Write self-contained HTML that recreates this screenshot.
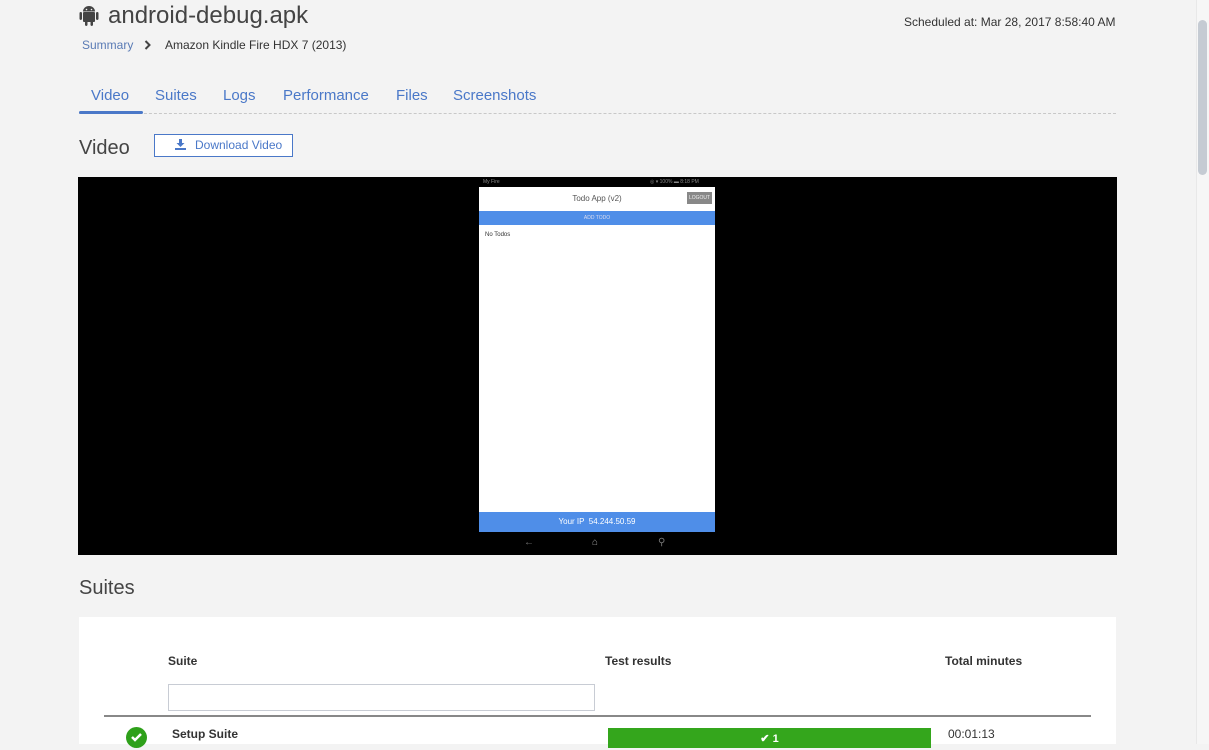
<!DOCTYPE html>
<html><head><meta charset="utf-8"><style>
*{margin:0;padding:0;box-sizing:border-box}
body{width:1209px;height:744px;overflow:hidden;background:#f3f3f3;font-family:"Liberation Sans",sans-serif;position:relative;color:#444}
.a{position:absolute}
</style></head><body>
<svg class="a" style="left:79px;top:5px" width="20" height="22" viewBox="0 0 20 22"><rect x="4" y="7" width="12" height="10" rx="1" fill="#444"/><path d="M4 6.5a6 5.5 0 0 1 12 0z" fill="#444"/><rect x="0.5" y="7" width="2.5" height="8" rx="1.2" fill="#444"/><rect x="17" y="7" width="2.5" height="8" rx="1.2" fill="#444"/><rect x="6" y="16" width="2.5" height="5" rx="1.2" fill="#444"/><rect x="11.5" y="16" width="2.5" height="5" rx="1.2" fill="#444"/><circle cx="7.5" cy="4.5" r=".8" fill="#f3f3f3"/><circle cx="12.5" cy="4.5" r=".8" fill="#f3f3f3"/></svg>
<div class="a" style="left:108px;top:2px;font-size:24px;color:#444">android-debug.apk</div>
<div class="a" style="left:82px;top:38px;font-size:12px;color:#5a7bb5">Summary</div>
<svg class="a" style="left:144px;top:40px" width="8" height="10" viewBox="0 0 8 10"><path d="M1.5 1l4 4-4 4" stroke="#444" stroke-width="2" fill="none"/></svg>
<div class="a" style="left:165px;top:38px;font-size:12px;color:#333">Amazon Kindle Fire HDX 7 (2013)</div>
<div class="a" style="left:904px;top:15px;font-size:12px;color:#333">Scheduled at: Mar 28, 2017 8:58:40 AM</div>
<div class="a" style="left:91px;top:87px;font-size:15px;color:#4a78c8">Video</div>
<div class="a" style="left:155px;top:87px;font-size:15px;color:#4a78c8">Suites</div>
<div class="a" style="left:223px;top:87px;font-size:15px;color:#4a78c8">Logs</div>
<div class="a" style="left:283px;top:87px;font-size:15px;color:#4a78c8">Performance</div>
<div class="a" style="left:396px;top:87px;font-size:15px;color:#4a78c8">Files</div>
<div class="a" style="left:453px;top:87px;font-size:15px;color:#4a78c8">Screenshots</div>
<div class="a" style="left:79px;top:113px;width:1037px;border-top:1px dashed #c8c8c8"></div>
<div class="a" style="left:79px;top:111px;width:64px;height:3px;background:#4a78c8;border-radius:2px"></div>
<div class="a" style="left:79px;top:137px;font-size:20px;color:#444">Video</div>
<div class="a" style="left:154px;top:134px;width:139px;height:23px;border:1px solid #4a78c8;background:#fff;font-size:12px;color:#4a78c8;padding:3px 0 0 40px">Download Video</div>
<svg class="a" style="left:175px;top:139px" width="11" height="11" viewBox="0 0 11 11"><path d="M4 0h3v4h2.5L5.5 8 1.5 4H4z" fill="#4a78c8"/><rect x="0" y="9" width="11" height="2" fill="#4a78c8"/></svg>
<div class="a" style="left:78px;top:177px;width:1039px;height:378px;background:#000"></div>
<div class="a" style="left:483px;top:179px;font-size:5px;color:#888">My Fire</div>
<div class="a" style="left:650px;top:179px;font-size:5px;color:#888">◎ ▾ 100% ▬ 8:18 PM</div>
<div class="a" style="left:479px;top:187px;width:236px;height:345px;background:#fff"></div>
<div class="a" style="left:479px;top:194px;width:236px;text-align:center;font-size:8px;color:#555">Todo App (v2)</div>
<div class="a" style="left:687px;top:192px;width:25px;height:12px;background:#888;font-size:5px;color:#eee;text-align:center;line-height:12px">LOGOUT</div>
<div class="a" style="left:479px;top:211px;width:236px;height:14px;background:#4f8ee8;color:#dde;font-size:5px;text-align:center;line-height:14px">ADD TODO</div>
<div class="a" style="left:485px;top:232px;font-size:6px;color:#333">No Todos</div>
<div class="a" style="left:479px;top:512px;width:236px;height:20px;background:#4f8ee8;color:#fff;font-size:8px;text-align:center;line-height:20px">Your IP &nbsp;54.244.50.59</div>
<div class="a" style="left:524px;top:537px;font-size:10px;color:#777">←</div>
<div class="a" style="left:592px;top:537px;font-size:10px;color:#999">⌂</div>
<div class="a" style="left:658px;top:537px;font-size:10px;color:#777">⚲</div>
<div class="a" style="left:79px;top:577px;font-size:20px;color:#444">Suites</div>
<div class="a" style="left:79px;top:617px;width:1037px;height:127px;background:#fff"></div>
<div class="a" style="left:168px;top:654px;font-size:12px;font-weight:bold;color:#333">Suite</div>
<div class="a" style="left:605px;top:654px;font-size:12px;font-weight:bold;color:#333">Test results</div>
<div class="a" style="left:945px;top:654px;font-size:12px;font-weight:bold;color:#333">Total minutes</div>
<div class="a" style="left:168px;top:684px;width:427px;height:27px;border:1px solid #c8ccd4"></div>
<div class="a" style="left:104px;top:715px;width:987px;height:2px;background:#888"></div>
<div class="a" style="left:126px;top:727px;width:21px;height:21px;border-radius:50%;background:#2ea01a"></div>
<svg class="a" style="left:130px;top:732px" width="13" height="10" viewBox="0 0 13 10"><path d="M2 5l3 3 6-6" stroke="#fff" stroke-width="2.5" fill="none"/></svg>
<div class="a" style="left:172px;top:727px;font-size:12px;font-weight:bold;color:#333">Setup Suite</div>
<div class="a" style="left:608px;top:728px;width:323px;height:20px;background:#34a61c;color:#fff;font-size:11px;font-weight:bold;text-align:center;line-height:22px">✔ 1</div>
<div class="a" style="left:948px;top:727px;font-size:12px;color:#333">00:01:13</div>
<div class="a" style="left:1196px;top:0;width:13px;height:744px;background:#f6f6f6;border-left:1px solid #e8e8e8"></div>
<div class="a" style="left:1198px;top:20px;width:9px;height:155px;background:#c5cbd3;border-radius:5px"></div>
</body></html>
